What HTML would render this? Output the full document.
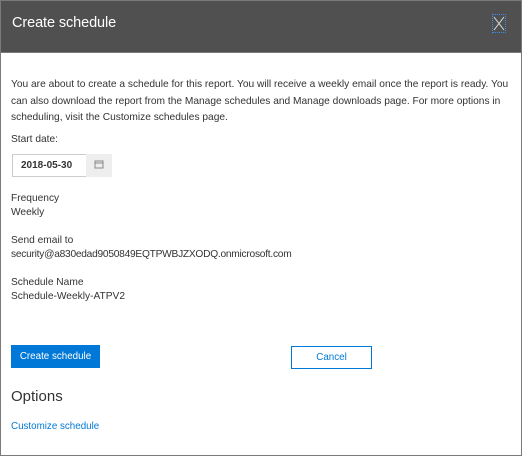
<!DOCTYPE html>
<html><head><style>
*{margin:0;padding:0;box-sizing:border-box}
body{width:522px;height:456px;overflow:hidden;background:#fff;font-family:"Liberation Sans",sans-serif;color:#333;position:relative}
.frame{position:absolute;left:0;top:0;width:522px;height:456px;border:1px solid #7a7a7a}
.hdr{position:absolute;left:0;top:0;width:522px;height:53px;background:#505050;border:1px solid #7a7a7a}
.hdr h1{position:absolute;left:11px;top:14px;font-size:14.5px;font-weight:normal;color:#fff;letter-spacing:-0.1px}
.x{position:absolute;left:491px;top:13px;width:14px;height:19px;border:1px dotted #3a8ee6}
.a{position:absolute;font-size:10.2px;line-height:16.5px;white-space:nowrap}
.date{position:absolute;left:12px;top:154px;width:75px;height:23px;border:1px solid #ccc;font-size:10px;font-weight:bold;padding:5px 0 0 8px;background:#fff}
.cal{position:absolute;left:86px;top:154px;width:26px;height:23px;background:#eee}
.btn1{position:absolute;left:11px;top:345px;width:89px;height:23px;background:#0078d7;color:#fff;font-size:9.8px;text-align:center;line-height:23px}
.btn2{position:absolute;left:291px;top:346px;width:81px;height:23px;border:1px solid #0078d7;color:#0078d7;font-size:9.8px;text-align:center;line-height:21px}
</style></head><body>
<div class="frame"></div>
<div class="hdr"><h1>Create schedule</h1>
<div class="x"><svg width="12" height="17" style="position:absolute;left:0;top:0"><path d="M1 2L11 15M11 2L1 15" stroke="#ddd" stroke-width="1"/></svg></div></div>
<div class="a" style="left:11px;top:77px">You are about to create a schedule for this report. You will receive a weekly email once the report is ready. You<br>can also download the report from the Manage schedules and Manage downloads page. For more options in<br>scheduling, visit the Customize schedules page.</div>
<div class="a" style="left:11px;top:132px">Start date:</div>
<div class="date">2018-05-30</div>
<div class="cal"><svg width="26" height="23"><rect x="9" y="7" width="8" height="7" fill="none" stroke="#888"/><line x1="9" y1="9" x2="17" y2="9" stroke="#888"/></svg></div>
<div class="a" style="left:11px;top:191px">Frequency</div>
<div class="a" style="left:11px;top:205px">Weekly</div>
<div class="a" style="left:11px;top:233px">Send email to</div>
<div class="a" style="left:11px;top:247px;letter-spacing:-0.25px">security@a830edad9050849EQTPWBJZXODQ.onmicrosoft.com</div>
<div class="a" style="left:11px;top:275px">Schedule Name</div>
<div class="a" style="left:11px;top:289px">Schedule-Weekly-ATPV2</div>
<div class="btn1">Create schedule</div>
<div class="btn2">Cancel</div>
<div class="a" style="left:11px;top:388px;font-size:15px;line-height:18px">Options</div>
<div class="a" style="left:11px;top:419px;color:#0078d7;font-size:9.8px">Customize schedule</div>
</body></html>
